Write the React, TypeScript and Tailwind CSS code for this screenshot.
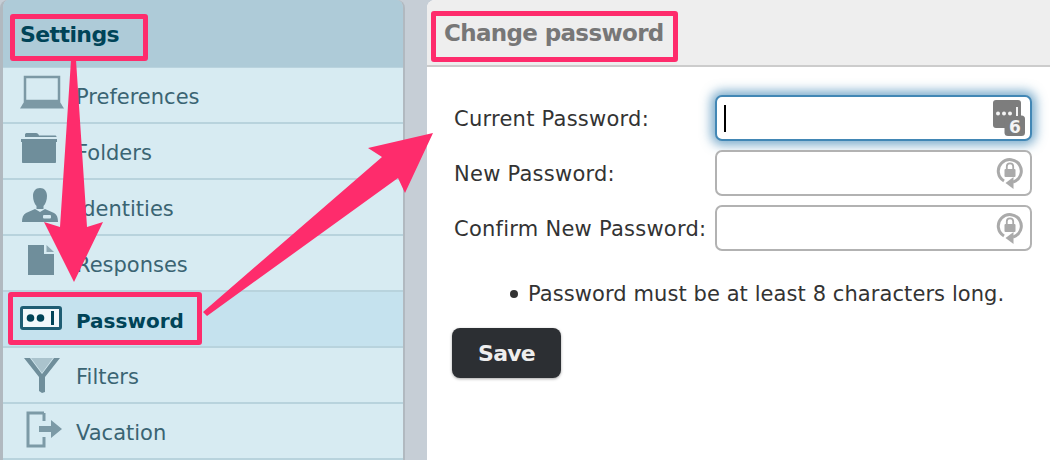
import React from 'react';

const FONT = "font-['DejaVu_Sans','Liberation_Sans',sans-serif]";

const LaptopIcon = () => (
  <svg viewBox="0 0 44 44" className="w-[44px] h-[44px] blur-[0.4px]">
    <rect x="5" y="4" width="34" height="24" fill="none" stroke="#7c99a5" strokeWidth="2.500" />
    <path d="M4 29h36l4 6.500H0z" fill="#7c99a5" />
  </svg>
);

const FolderIcon = () => (
  <svg viewBox="0 0 44 44" className="w-[44px] h-[44px] blur-[0.4px]">
    <path d="M5 8V5.500C5 4.500 6 4 7 4h9c1.500 0 2.500 1 3 2.500h16c1 0 1.500.5 1.500 1.500z" fill="#6f8e9b" />
    <path d="M1 10h36v3h-1v20c0 .6-.4 1-1 1H3c-.6 0-1-.4-1-1V13H1z" fill="#6f8e9b" />
  </svg>
);

const PersonIcon = () => (
  <svg viewBox="0 0 44 44" className="w-[44px] h-[44px] blur-[0.4px]">
    <path d="M20 3c4.500 0 7 3.500 7 8 0 4-1.500 8-3.500 10v3h-7v-3c-2-2-3.500-6-3.500-10 0-4.500 2.500-8 7-8z" fill="#6f8e9b" />
    <path d="M15 24l5 3 5-3 9 4c3 1.500 4 5 4 9H2c0-4 1-7.500 4-9z" fill="#6f8e9b" />
    <rect x="23" y="30" width="8" height="3.500" rx="1" fill="#d7ebf2" />
  </svg>
);

const FileIcon = () => (
  <svg viewBox="0 0 44 44" className="w-[44px] h-[44px] blur-[0.4px]">
    <path d="M8 4h16v9h10v21H8z" fill="#6f8e9b" />
    <path d="M26.500 4l7.500 7h-7.500z" fill="#8fa9b4" />
  </svg>
);

const PasswordIcon = () => (
  <svg viewBox="0 0 44 44" className="w-[44px] h-[44px] blur-[0.3px]">
    <rect x="1.500" y="10.500" width="39" height="21" rx="1.500" fill="#f2f8fb" stroke="#1f5d73" strokeWidth="3" />
    <circle cx="10.500" cy="21" r="3.800" fill="#004458" />
    <circle cx="20.500" cy="21" r="3.800" fill="#004458" />
    <rect x="31" y="14" width="3" height="14" fill="#004458" />
  </svg>
);

const FilterIcon = () => (
  <svg viewBox="0 0 44 44" className="w-[44px] h-[44px] blur-[0.4px]">
    <path d="M11 5h22l-11 15z" fill="#aac3cd" />
    <path d="M4 5h6l12 16L34 5h6L25 24v15l-3 1-3-2V24z" fill="#6f8e9b" />
  </svg>
);

const VacationIcon = () => (
  <svg viewBox="0 0 44 44" className="w-[44px] h-[44px] blur-[0.4px]">
    <path d="M24 4H8v33h16v-9M24 4v8" fill="none" stroke="#7c9aa6" strokeWidth="3" />
    <path d="M19 17h12v-6l11 9-11 9v-6H19z" fill="#7c9aa6" />
  </svg>
);

const CountIcon = () => (
  <svg viewBox="0 0 32 36" className="w-[32px] h-[36px]">
    <rect x="0" y="0" width="28" height="28" rx="3" fill="#7d7d7d" />
    <rect x="11.500" y="15.500" width="20.500" height="20.500" rx="3.500" fill="#7d7d7d" />
    <circle cx="5" cy="13.500" r="2" fill="#f4f4f4" />
    <circle cx="11" cy="13.500" r="2" fill="#f4f4f4" />
    <circle cx="17" cy="13.500" r="2" fill="#f4f4f4" />
    <rect x="23" y="7" width="2" height="9" fill="#f4f4f4" />
    <text x="22" y="33" textAnchor="middle" fontSize="17" fontWeight="700" fill="#f4f4f4" fontFamily="DejaVu Sans">6</text>
  </svg>
);

const LockCycleIcon = () => (
  <svg viewBox="0 0 28 34" className="w-[28px] h-[34px]">
    <path d="M8 25A11.500 11.500 0 1 1 17 26.100" fill="none" stroke="#aaaaaa" strokeWidth="3" />
    <path d="M17.500 21v12l-8-6z" fill="#aaaaaa" />
    <path d="M10.800 13v-2.500a3.200 3.200 0 0 1 6.400 0V13" fill="none" stroke="#aaaaaa" strokeWidth="1.800" />
    <rect x="8.500" y="13" width="11" height="8" rx="1" fill="#aaaaaa" />
  </svg>
);

const NAV = [
  { label: 'Preferences', icon: <LaptopIcon /> },
  { label: 'Folders', icon: <FolderIcon /> },
  { label: 'Identities', icon: <PersonIcon /> },
  { label: 'Responses', icon: <FileIcon /> },
  { label: 'Password', icon: <PasswordIcon />, selected: true },
  { label: 'Filters', icon: <FilterIcon /> },
  { label: 'Vacation', icon: <VacationIcon /> },
];

const FIELDS = [
  { label: 'Current Password:', focused: true },
  { label: 'New Password:' },
  { label: 'Confirm New Password:' },
];

// the pink markup drawn over the screenshot
const Annotations = () => (
  <>
    <svg viewBox="0 0 1050 460" className="absolute inset-0 w-[1050px] h-[460px] pointer-events-none">
      <path d="M71 60h5l11 167 16-5-29 60-30-60 16 5z" fill="#fe2c6c" />
      <path d="M203 312l179-155-14-9 65-15-28 60-7-15L207 316z" fill="#fe2c6c" />
    </svg>
    <div className="absolute left-[10px] top-[14px] w-[138px] h-[47px] border-[5px] border-[#fe2c6c] rounded-[3px]" />
    <div className="absolute left-[8px] top-[292px] w-[194px] h-[53px] border-[5px] border-[#fe2c6c] rounded-[3px]" />
    <div className="absolute left-[431px] top-[11px] w-[247px] h-[51px] border-[5px] border-[#fe2c6c] rounded-[3px]" />
  </>
);

export default function App() {
  return (
    <div className={`${FONT} relative w-[1050px] h-[460px] overflow-hidden bg-[#c6ced6] flex gap-[22px]`}>
      <aside className="w-[405px] h-full border-l-[3px] border-r-2 border-[#b1b9c0] rounded-t-[8px] overflow-hidden flex flex-col shrink-0">
        <div className="h-[68px] shrink-0 bg-[#aecbd8] border-b border-[#b9d3de] flex items-center pl-[17px] pt-[2px]">
          <h2 className="text-[22px] font-bold text-[#004458] tracking-[-0.6px]">Settings</h2>
        </div>
        {NAV.map((item) => (
          <div
            key={item.label}
            className={`h-[56px] shrink-0 border-b-2 border-[#b8d3dd] flex items-center pl-[17px] gap-[12px] ${item.selected ? 'bg-[#c5e2ee]' : 'bg-[#d7ebf2]'}`}
          >
            {item.icon}
            <span className={`${item.selected ? 'mt-[3px] text-[20px] font-bold text-[#004458]' : 'mt-[6px] text-[21px] text-[#3a6473]'}`}>{item.label}</span>
          </div>
        ))}
      </aside>

      <main className="flex-1 bg-white rounded-tl-[8px] overflow-hidden flex flex-col">
        <div className="h-[67px] shrink-0 bg-[#eeeeee] border-b-2 border-[#cccccc] flex items-center pl-[17px] pt-[2px]">
          <h1 className="text-[23px] font-bold text-[#777777] tracking-[-0.65px]">Change password</h1>
        </div>
        <div className="pl-[27px] pt-[28px] flex flex-col">
          <div className="flex flex-col gap-[9px]">
            {FIELDS.map((f) => (
              <div key={f.label} className="flex items-center">
                <label className="w-[261px] shrink-0 mt-[4px] text-[21px] text-[#333333] tracking-[0.25px]">{f.label}</label>
                <div
                  className={`w-[317px] h-[46px] rounded-[7px] border-2 bg-white flex items-center justify-between pl-[7px] ${f.focused ? 'pr-[5px] border-[#4287b5] shadow-[0_0_11px_4px_rgba(66,135,181,0.7)]' : 'pr-[6px] border-[#b2b2b2]'}`}
                >
                  {f.focused ? <span className="w-[2px] h-[27px] bg-black" /> : <span />}
                  {f.focused ? <CountIcon /> : <LockCycleIcon />}
                </div>
              </div>
            ))}
          </div>
          <ul className="mt-[28px] pl-[59px] list-none">
            <li className="text-[21px] text-[#333333] tracking-[0.08px] leading-[30px] flex items-center gap-[10px] -ml-[3px]">
              <span className="w-[8px] h-[8px] rounded-full bg-[#333333] shrink-0" />
              Password must be at least 8 characters long.
            </li>
          </ul>
          <button className="mt-[19px] -ml-[2px] w-[109px] h-[50px] rounded-[8px] bg-[#2c2f33] text-[#eeeeee] text-[22px] font-bold tracking-[-0.8px] shadow-[0_1px_3px_rgba(0,0,0,0.35)]">Save</button>
        </div>
      </main>

      <Annotations />
    </div>
  );
}
